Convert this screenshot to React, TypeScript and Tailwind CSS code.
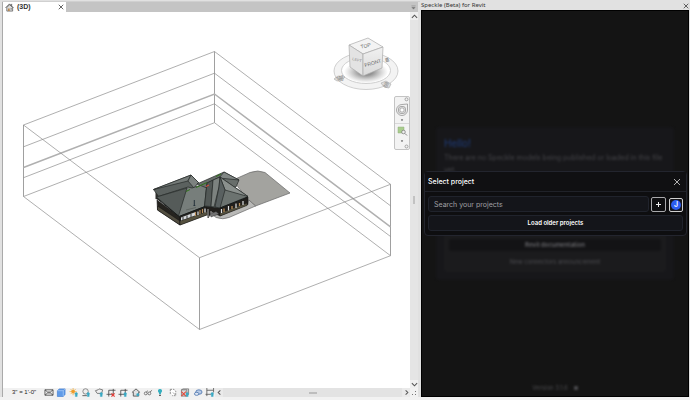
import React from "react";

const LINE = "#8c8c8c";

function CloseIcon({ className }: { className: string }) {
  return (
    <svg viewBox="0 0 8 8" className={className} aria-hidden="true">
      <path d="M1 1l6 6M7 1L1 7" stroke="currentColor" strokeWidth="1" fill="none" />
    </svg>
  );
}

function Chevron({ d, label, className }: { d: string; label: string; className: string }) {
  return (
    <button type="button" aria-label={label} className={`flex items-center justify-center text-[#555] ${className}`}>
      <svg viewBox="0 0 8 8" className="h-[7px] w-[7px]" aria-hidden="true">
        <path d={d} stroke="currentColor" strokeWidth="1.2" fill="none" />
      </svg>
    </button>
  );
}

function HouseGlyph({ className }: { className: string }) {
  return (
    <svg viewBox="0 0 10 10" className={className} aria-hidden="true">
      <path d="M2 5v4h6.5V5L5.2 1.8z" fill="#dcdcdc" stroke="#555" strokeWidth=".8" />
      <path d="M.6 5.4L5 1l4.4 4.4M7.4 1v2" stroke="#444" strokeWidth=".9" fill="none" />
      <path d="M3.4 9V6.2h1.8V9z" fill="#b9854a" />
      <path d="M6.2 5.8h1.4v1.4H6.2z" fill="#777" />
    </svg>
  );
}

function Model() {
  const verticals = [
    "M23.5 125V196.5",
    "M214.5 51.5V122.7",
    "M390.5 184.3V255.7",
    "M199.5 257.7V329.5",
  ];
  const backLevels = [
    "M23.5 125L214.5 51.5L390.5 184.3",
    "M23.5 146.8L214.5 73.2L390.5 205.8",
    "M23.5 177.7L214.5 103.8L390.5 236.5",
    "M23.5 196.5L214.5 122.7L390.5 255.7",
  ];
  return (
    <svg viewBox="3 12 407 376" preserveAspectRatio="xMidYMid meet" className="h-full w-full" role="img" aria-label="3D view of a house">
      <g fill="none" stroke={LINE} strokeWidth=".7">
        {verticals.map((d) => <path key={d} d={d} stroke="#777" />)}
        {backLevels.map((d) => <path key={d} d={d} />)}
        <path d="M23.5 167.5L214.5 94L390.5 226.8" stroke="#b0b0b0" strokeWidth="1.5" />
        <path d="M23.5 125L199.5 257.7L390.5 184.3M23.5 196.5L199.5 329.5L390.5 255.7" />
      </g>

      <g strokeLinejoin="round">
        <path d="M233 180L250 172.5Q258 169.500 265 172.500L290 193L255.500 206L247 199z" fill="#a3a39f" stroke="#666" strokeWidth=".7" />
        <path d="M249 200L255.500 206L229 217.500Q223 220 216 217.500L212 214L220 214L247 204z" fill="#b9b9b7" stroke="#555" strokeWidth=".6" />
        <path d="M155.500 192v7l8 2v-5z" fill="#302f2c" />
        <path d="M157 200L180 217V225L157.500 210z" fill="#25231f" stroke="#111" strokeWidth=".6" />
        <path d="M157.500 206L180 221V225L157.500 210z" fill="#514d40" stroke="#111" strokeWidth=".5" />
        <path d="M180 216L208 205V214.500L180 225z" fill="#25231f" stroke="#111" strokeWidth=".5" />
        <path d="M180 221L208 211V214.500L180 225z" fill="#55513f" stroke="#111" strokeWidth=".4" />
        <path d="M181 217.500L195 212.300V215.500L181 220.500z" fill="#d6dadd" />
        <path d="M183 217v3M187 215.500v3M191 214v3" stroke="#222" strokeWidth=".9" />
        <path d="M195.500 212v4M200 210v4M202.500 209v4" stroke="#b98d58" strokeWidth="1.100" />
        <path d="M198 211.500v3.500M205 208.500v4" stroke="#e2e5e8" strokeWidth="1.200" />
        <path d="M206 206L220 208L248 197V204.500L220 216L212 212L208 218z" fill="#211f1c" stroke="#111" strokeWidth=".5" />
        <path d="M220 213L247 203V205.500L220 216z" fill="#55513f" stroke="#111" strokeWidth=".4" />
        <path d="M221.500 209v4M228.500 206v4.500M236 203.500v4.500M243 201v4" stroke="#dde0e2" strokeWidth="1.200" />
        <path d="M224 208.500v3.500M232 206v3M239.500 203v3" stroke="#b98d58" strokeWidth="1.300" />
        <path d="M208 209v8M211 211v5" stroke="#d4d4d4" strokeWidth=".8" />
        <path d="M210 214L216 211.500L219 214L211 217z" fill="#737373" stroke="#222" strokeWidth=".4" />

        <g stroke="#252928" strokeWidth=".7">
          <path d="M153.500 189.500L191 175L198.500 182.500L189 193L159 197z" fill="#5b615f" />
          <path d="M153.500 189.500L188 181L191 175z" fill="#747a78" />
          <path d="M188 181L191 175L198.500 182.500L194 188z" fill="#7d8280" />
          <path d="M156.500 197L188 187L192 188L207 183L205 206.500L179 216.500z" fill="#777e7b" />
          <path d="M156.500 197L187 188L178.500 216z" fill="#555b59" />
          <path d="M197 184L224 172L239 180L236 187L214 191z" fill="#686e6b" />
          <path d="M224 172L239 180L219 178z" fill="#818785" />
          <path d="M207 183L220 177L248 196.500L220 208L204.500 206z" fill="#6c7370" />
          <path d="M207 183L213 180L211 206.500L204.500 206z" fill="#525856" />
          <path d="M213 180L220 177L219 187L214 207L211 206.500z" fill="#7c827f" />
          <path d="M220 177L248 196.500L225 190z" fill="#8a908d" />
          <path d="M220 177L225 190L220 208L215 207L219 187z" fill="#596060" />
        </g>
        <path d="M157 198.500L179 216.500L205 206.500M220 208L248 197" stroke="#161918" strokeWidth="1" fill="none" />
        <path d="M186 191.500L190 189.500M196 187.500L207 182.500M216 176.500L221 174" stroke="#2f7318" strokeWidth="1" />
        <path d="M206 186.500L209 185" stroke="#ef4a32" strokeWidth="1" />
        <path d="M194.300 200v5.500M193.500 205.500h1.800" stroke="#24313b" strokeWidth="1" />
        <path d="M186 210L196 207.500" stroke="#505653" strokeWidth=".6" />
      </g>
    </svg>
  );
}

function ViewCube() {
  return (
    <svg viewBox="0 0 68 56" className="h-14 w-[68px]" role="img" aria-label="View cube">
      <defs>
        <radialGradient id="cubeShadow">
          <stop offset="0.3" stopColor="#777" stopOpacity=".8" />
          <stop offset="1" stopColor="#999" stopOpacity="0" />
        </radialGradient>
        <linearGradient id="cubeFront" x1="0" y1="0" x2="0" y2="1">
          <stop offset="0" stopColor="#f1f1f1" />
          <stop offset="1" stopColor="#d9d9d9" />
        </linearGradient>
      </defs>
      <path fillRule="evenodd" d="M2 34a32 18.500 0 1 0 64 0a32 18.500 0 1 0-64 0M9.500 33.500a24.500 13 0 1 0 49 0a24.500 13 0 1 0-49 0" fill="#f3f3f3" stroke="#c4c4c4" strokeWidth=".8" />
      <ellipse cx="34" cy="35" rx="22" ry="11" fill="url(#cubeShadow)" />
      <path d="M2 42l4-3 7 1-3 3-5 1zM49 46l5-2 5 3-2 4-5-1z" fill="#ddd" stroke="#aaa" strokeWidth=".6" />
      <g fontFamily="Liberation Sans, Arial, sans-serif" fontSize="7" fontWeight="700" fill="#f4f4f4" stroke="#909090" strokeWidth=".5">
        <text x="6" y="45" transform="rotate(-20 6 45)">W</text>
        <text x="51" y="49" transform="rotate(25 51 49)">S</text>
        <text x="54" y="25" fontSize="5" transform="rotate(-15 54 25)">E</text>
      </g>
      <path d="M17 8L36 1L51 10L31 17z" fill="#f3f3f3" stroke="#aaa" strokeWidth=".7" />
      <path d="M17 8L31 17V39L18 30z" fill="#e3e3e3" stroke="#aaa" strokeWidth=".7" />
      <path d="M31 17L51 10L50 31L31 39z" fill="url(#cubeFront)" stroke="#aaa" strokeWidth=".7" />
      <g fontFamily="Liberation Sans, Arial, sans-serif" fill="#666">
        <text x="29" y="11.500" fontSize="5" transform="rotate(-12 29 11.500)">TOP</text>
        <text x="20" y="23" fontSize="4" fill="#888" transform="rotate(14 20 23)">LEFT</text>
        <text x="33" y="30" fontSize="5" transform="rotate(-16 33 30)">FRONT</text>
      </g>
    </svg>
  );
}

function NavigationBar() {
  return (
    <div className="flex h-[54px] w-4 flex-col items-center rounded-[2px] border border-[#c4c4c4] bg-[#f3f3f3]">
      <svg viewBox="0 0 14 52" className="w-full" role="img" aria-label="Navigation tools">
        <g fill="none" stroke="#888" strokeWidth=".7">
          <circle cx="11.500" cy="2.300" r="1.500" />
          <circle cx="11.500" cy="49.500" r="1.500" />
          <path d="M0 26.500h14" stroke="#ccc" />
          <path d="M12.500 7v6a5.500 5.500 0 1 1-5.500-5.500z" fill="#f1f1f1" />
          <rect x="3.500" y="9.500" width="7" height="7" rx="2.500" />
          <rect x="5" y="11" width="4" height="4" rx="1" fill="#fff" />
        </g>
        <path d="M3 30h6v6H3z" fill="#a9cd8d" stroke="#91ae7c" strokeWidth=".5" />
        <circle cx="8.500" cy="35" r="1.800" fill="#eee" stroke="#777" strokeWidth=".7" />
        <path d="M10 36.500l2 2" stroke="#777" strokeWidth=".9" />
        <path d="M5.800 22.500h2.400L7 24zM5.800 43.500h2.400L7 45z" fill="#333" />
      </svg>
    </div>
  );
}

const bulb = <path d="M7.500 5a1.500 1.500 0 0 1 1 2.600v1.900h-2V7.600a1.500 1.500 0 0 1 1-2.600z" fill="#3ba9c4" stroke="#3ba9c4" strokeWidth=".5" />;

const tools: { name: string; icon: React.ReactNode }[] = [
  { name: "Detail level", icon: <path d="M.5 2h9v6h-9zM.5 2l3 2.500h3l3-2.500M.5 8l3-2.500h3l3 2.500" fill="#eee" stroke="#444" strokeWidth=".9" /> },
  { name: "Visual style", icon: <><path d="M1 3l2-2h6.500v6l-2 2.500H1z" fill="#5f9be8" stroke="#3e7bd0" strokeWidth=".7" /><path d="M1 3h6.500v6M7.500 3l2-2" fill="none" stroke="#a9ccf5" strokeWidth=".8" /></> },
  { name: "Sun path", icon: <><path d="M4 0v8M0 4h8M1.200 1.200l5.600 5.600M6.800 1.200L1.200 6.800" stroke="#f0b44c" strokeWidth=".9" /><circle cx="4" cy="4" r="2" fill="#ee9b2c" />{bulb}</> },
  { name: "Shadows", icon: <><circle cx="4.500" cy="3.800" r="3" fill="#eee" stroke="#777" strokeWidth=".9" /><path d="M1 8.500h5" stroke="#555" />{bulb}</> },
  { name: "Rendering", icon: <><path d="M1 3l3-1 1-1 4 1-1 4H3z" fill="#eee" stroke="#666" strokeWidth=".9" />{bulb}</> },
  { name: "Crop view off", icon: <><path d="M2.500 9.500v-7H10M0 7h7.500V1" fill="none" stroke="#444" strokeWidth=".9" /><path d="M5.500 6l3.500 3.500M9 6L5.500 9.500" stroke="#e43b35" strokeWidth="1.300" /></> },
  { name: "Crop region", icon: <><path d="M2.500 9.500v-7H10M0 7h7.500V1" fill="none" stroke="#444" strokeWidth=".9" />{bulb}</> },
  { name: "Lock 3D view", icon: <><path d="M.5 5L5 1l4.500 4M2 4.500V9h6V4.500" fill="#ddd" stroke="#444" strokeWidth=".9" /><circle cx="7" cy="7.500" r="1.600" fill="#3ba9c4" /></> },
  { name: "Temporary hide", icon: <><circle cx="2.500" cy="6" r="1.600" fill="none" stroke="#555" strokeWidth=".8" /><circle cx="6.500" cy="6" r="1.600" fill="none" stroke="#555" strokeWidth=".8" /><path d="M3 4.500L5 3M7 4.500L9.500 2.500" stroke="#555" strokeWidth=".8" /></> },
  { name: "Reveal hidden", icon: <><path d="M5 1a2.300 2.300 0 0 1 1.300 4.200L5.900 7H4.100l-.4-1.800A2.300 2.300 0 0 1 5 1z" fill="#35afbf" /><path d="M4 8.200h2" stroke="#555" strokeWidth="1.200" /></> },
  { name: "View properties", icon: <><path d="M2 1.500h4l2 2v5H4M2 1.500v5" fill="#fff" stroke="#777" strokeWidth=".9" strokeDasharray="2 1" /><path d="M5 5l3 3" stroke="#999" /></> },
  { name: "Analytical model", icon: <><path d="M1 2l2-1h6v6L7 9H1zM1 2h6v7" fill="#ddd" stroke="#666" strokeWidth=".8" /><path d="M1 9l5-5M1 4l5 5" stroke="#e0483a" strokeWidth="1.200" />{bulb}</> },
  { name: "Displacement", icon: <><ellipse cx="6" cy="4.500" rx="3.500" ry="2.500" fill="#b9cbe6" stroke="#4d75ae" strokeWidth=".9" /><ellipse cx="3.500" cy="6.500" rx="2.500" ry="1.700" fill="#dfe7f3" stroke="#4d75ae" strokeWidth=".9" /></> },
  { name: "Constraints", icon: <><path d="M1.500 0v9M9 0v5M1.500 2.500H9M0 7h6" fill="none" stroke="#555" strokeWidth=".9" />{bulb}</> },
];

function ViewToolbar() {
  return (
    <div className="flex h-[9px] items-center bg-[#f1f1f1]">
      <span className="w-[41px] pl-[9px] text-[6px] leading-[9px] text-[#222]">3" = 1'-0"</span>
      <div className="flex w-[171px] shrink-0 items-center justify-between">
        {tools.map((t) => (
          <button key={t.name} type="button" aria-label={t.name} className="h-[9px] w-[10px]">
            <svg viewBox="0 0 10 10" className="h-full w-full" aria-hidden="true">{t.icon}</svg>
          </button>
        ))}
      </div>
      <Chevron d="M5 1.500L2.500 4L5 6.500" label="Scroll left" className="h-full w-2 bg-[#eaeaea]" />
      <div className="flex h-full flex-1 items-center justify-center bg-[#e3e3e3]">
        <div className="h-[2px] w-2 bg-[#bdbdbd]" />
      </div>
      <Chevron d="M3 1.500L5.500 4L3 6.500" label="Scroll right" className="h-full w-2 bg-[#eaeaea]" />
      <svg viewBox="0 0 8 9" className="h-full w-2" aria-hidden="true">
        <path d="M5 3h1v1H5zM5 6h1v1H5zM2 6h1v1H2z" fill="#777" />
      </svg>
    </div>
  );
}

function Viewer() {
  return (
    <section className="flex min-w-0 flex-1 flex-col border-l border-[#aaa] bg-white">
      <div className="flex h-[10px] items-center bg-[#c4c4c4]">
        <div className="flex h-full w-[63px] items-center bg-white pl-[2px]">
          <HouseGlyph className="h-[9px] w-[9px]" />
          <span className="ml-[3px] flex-1 text-[7px] font-bold leading-[10px] text-[#333]">(3D)</span>
          <button type="button" aria-label="Close view" className="mr-[2px] text-[#333]">
            <CloseIcon className="h-[6px] w-[6px]" />
          </button>
        </div>
        <div className="flex flex-1 justify-end pr-[2px]">
          <svg viewBox="0 0 6 6" className="h-[5px] w-[5px]" aria-hidden="true">
            <path d="M.5 1h5M1 2.800h4L3 5z" fill="#777" stroke="#777" strokeWidth=".5" />
          </svg>
        </div>
      </div>
      <div className="flex min-h-0 flex-1">
        <div className="relative min-w-0 flex-1">
          <Model />
          <div className="absolute right-[10px] top-[25px]"><ViewCube /></div>
          <div className="absolute right-0 top-[84px]"><NavigationBar /></div>
        </div>
        <div className="flex w-2 flex-col bg-[#e5e5e5]">
          <Chevron d="M1 5.500L4 2.500L7 5.500" label="Scroll up" className="h-2 w-full bg-[#efefef]" />
          <div className="flex flex-1 items-center justify-center">
            <div className="h-2 w-[2px] bg-[#c2c2c2]" />
          </div>
          <Chevron d="M1 2.500L4 5.500L7 2.500" label="Scroll down" className="h-2 w-full bg-[#efefef]" />
        </div>
      </div>
      <ViewToolbar />
    </section>
  );
}

function EmptyCard() {
  return (
    <div className="mx-[14px] mt-[116px] flex h-[153px] flex-col rounded-[4px] bg-[#17171a] px-2 pt-[9px] blur-[1px]">
      <h2 className="text-[10px] leading-[14px] text-[#1f3d7c]">Hello!</h2>
      <p className="mt-[2px] text-[7px] leading-[12px] text-[#454549]">
        There are no Speckle models being published or loaded in this file yet.
      </p>
      <div className="mb-2 mt-3 flex flex-1 flex-col justify-end rounded-[3px] bg-[#1b1b1d] px-[5px] pb-1">
        <button type="button" className="h-3 rounded-[2px] bg-[#131315] text-[6px] font-semibold leading-3 text-[#69696d]">Revit documentation</button>
        <button type="button" className="mt-[5px] h-3 text-[6px] leading-3 text-[#4c4c50]">New connectors announcement</button>
      </div>
    </div>
  );
}

function ProjectDialog() {
  return (
    <div role="dialog" aria-labelledby="dialog-title" className="absolute left-[2px] right-px top-[160px] rounded-[4px] border border-[#23252e] bg-[#0e0e10]">
      <div className="flex h-5 items-center justify-between border-b border-[#202229] bg-[#101012] pl-[3px] pr-[5px]">
        <h1 id="dialog-title" className="text-[7px] font-medium leading-[10px] text-white">Select project</h1>
        <button type="button" aria-label="Close" className="text-[#b0b0b0]"><CloseIcon className="h-2 w-2" /></button>
      </div>
      <div className="px-[3px] pb-1 pt-1">
        <div className="flex items-center">
          <input
            type="text"
            aria-label="Search your projects"
            placeholder="Search your projects"
            className="h-4 min-w-0 flex-1 rounded-[3px] border border-[#20232c] bg-[#14151a] px-[5px] text-[7px] leading-[10px] text-white placeholder:text-[#a0a0a4]"
          />
          <button type="button" aria-label="New project" className="ml-[2px] flex h-[15px] w-[15px] items-center justify-center rounded-[2px] border border-[#a9a9ac] text-[#f1f1f1]">
            <svg viewBox="0 0 7 7" className="h-[7px] w-[7px]" aria-hidden="true">
              <path d="M3.500 1v5M1 3.500h5" stroke="currentColor" strokeWidth="1" />
            </svg>
          </button>
          <button type="button" aria-label="Account" className="ml-[3px] mt-[2px] flex h-[14px] w-[14px] items-center justify-center rounded-[2px] border border-[#d0d0d0] bg-[#15151a]">
            <span className="h-[10px] w-[10px] rounded-full bg-[#2b5cf0] text-center text-[7px] font-semibold leading-[10px] text-white">J</span>
          </button>
        </div>
        <button type="button" className="mt-[3px] block h-4 w-full rounded-[3px] border border-[#20232c] bg-[#14151a] text-center text-[6px] font-semibold leading-[14px] text-white">
          Load older projects
        </button>
      </div>
    </div>
  );
}

function SpecklePanel() {
  return (
    <aside className="flex w-[270px] shrink-0 flex-col px-px">
      <div className="flex h-[9px] items-center justify-between text-[#333]">
        <span className="font-['Noto_Sans',sans-serif] text-[6px] leading-[9px]">Speckle (Beta) for Revit</span>
        <button type="button" aria-label="Close panel"><CloseIcon className="h-[6px] w-[6px]" /></button>
      </div>
      <div className="relative flex flex-1 flex-col overflow-hidden border border-black bg-[#141414] font-['Inter',sans-serif]">
        <EmptyCard />
        <p className="mt-auto flex items-center justify-center gap-[6px] pb-1 text-[6px] leading-[8px] text-[#4a4a4d] blur-[1px]">
          Version 3.1.6
          <span className="h-1 w-1 rounded-[1px] bg-[#4a4a4d]" />
        </p>
        <ProjectDialog />
      </div>
    </aside>
  );
}

export default function App() {
  return (
    <main className="flex h-screen w-full flex-col overflow-hidden bg-[#e1e1e1] font-['Liberation_Sans',Arial,sans-serif]">
      <div className="flex min-h-0 flex-1 pl-[2px] pt-px">
        <div className="flex min-w-0 flex-1 border-t border-[#d0d0d0] pr-[2px]"><Viewer /></div>
        <SpecklePanel />
      </div>
      <div className="h-[3px] bg-[#f2f2f2]" />
    </main>
  );
}
